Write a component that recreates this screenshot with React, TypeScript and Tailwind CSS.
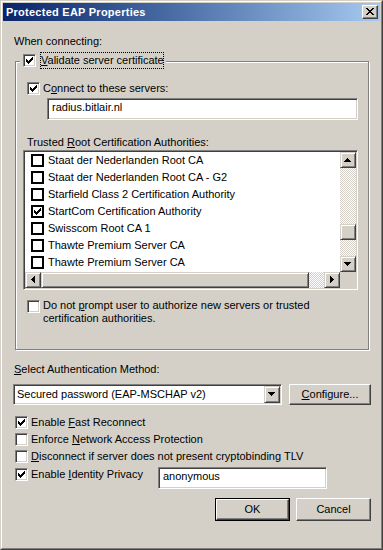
import React from "react";

const SUNKEN =
  "border border-t-[#808080] border-l-[#808080] border-b-white border-r-white shadow-[inset_1px_1px_0_#404040,inset_-1px_-1px_0_#d4d0c8]";
const RAISED =
  "border border-t-white border-l-white border-b-[#404040] border-r-[#404040] shadow-[inset_-1px_-1px_0_#808080] bg-[#d4d0c8]";
const SCROLLBTN =
  "border border-t-[#d4d0c8] border-l-[#d4d0c8] border-b-[#404040] border-r-[#404040] shadow-[inset_1px_1px_0_#fff,inset_-1px_-1px_0_#808080] bg-[#d4d0c8]";
const TRACK =
  "bg-[image:conic-gradient(#fff_25%,#d4d0c8_0_50%,#fff_0_75%,#d4d0c8_0)] bg-[length:2px_2px]";

const CHECK_PATH =
  "M0 2h1v3H0zM1 3h1v3H1zM2 4h1v3H2zM3 3h1v3H3zM4 2h1v3H4zM5 1h1v3H5zM6 0h1v3H6z";

function CheckMark() {
  return (
    <svg width="7" height="7" viewBox="0 0 7 7" shapeRendering="crispEdges">
      <path d={CHECK_PATH} fill="#000" />
    </svg>
  );
}

function CheckBox({ checked }: { checked?: boolean }) {
  return (
    <div
      className={`w-[13px] h-[13px] shrink-0 bg-white ${SUNKEN} flex items-center justify-center`}
    >
      {checked && <CheckMark />}
    </div>
  );
}

function FlatCheck({ checked }: { checked?: boolean }) {
  return (
    <div className="w-[13px] h-[13px] shrink-0 bg-white border-2 border-black flex items-center justify-center">
      {checked && <CheckMark />}
    </div>
  );
}

type Dir = "up" | "down" | "left" | "right";
const ARROWS: Record<Dir, string> = {
  up: "M6 5h1v1H6zM5 6h3v1H5zM4 7h5v1H4zM3 8h7v1H3z",
  down: "M3 5h7v1H3zM4 6h5v1H4zM5 7h3v1H5zM6 8h1v1H6z",
  left: "M5 6h1v1H5zM6 5h1v3H6zM7 4h1v5H7zM8 3h1v7H8z",
  right: "M5 3h1v7H5zM6 4h1v5H6zM7 5h1v3H7zM8 6h1v1H8z",
};

function ScrollBtn({ dir, h = 16 }: { dir: Dir; h?: number }) {
  return (
    <div
      className={`w-[16px] shrink-0 ${SCROLLBTN} ${h === 17 ? "h-[17px]" : "h-[16px]"}`}
    >
      <svg
        width="14"
        height={h - 2}
        viewBox={`0 0 14 ${h - 2}`}
        shapeRendering="crispEdges"
        className="block"
      >
        <path d={ARROWS[dir]} fill="#000" />
      </svg>
    </div>
  );
}

function U({ children }: { children: React.ReactNode }) {
  return <span className="underline underline-offset-[1px]">{children}</span>;
}

const ITEMS: [string, boolean][] = [
  ["Staat der Nederlanden Root CA", false],
  ["Staat der Nederlanden Root CA - G2", false],
  ["Starfield Class 2 Certification Authority", false],
  ["StartCom Certification Authority", true],
  ["Swisscom Root CA 1", false],
  ["Thawte Premium Server CA", false],
  ["Thawte Premium Server CA", false],
];

function CheckRow({
  checked,
  children,
  className = "",
}: {
  checked?: boolean;
  children: React.ReactNode;
  className?: string;
}) {
  return (
    <div className={`flex items-center h-[13px] ${className}`}>
      <CheckBox checked={checked} />
      <span className="ml-[3px] whitespace-nowrap leading-[13px]">{children}</span>
    </div>
  );
}

export default function App() {
  return (
    <div className="w-[383px] h-[550px] overflow-hidden font-['Liberation_Sans',Arial,sans-serif] text-[11px] leading-[13px] text-black bg-[#d4d0c8] border border-t-[#d4d0c8] border-l-[#d4d0c8] border-b-[#404040] border-r-[#404040]">
      <div className="h-full border border-t-white border-l-white border-b-[#808080] border-r-[#808080] p-[1px] flex flex-col">
        {/* Title bar */}
        <div className="h-[18px] shrink-0 flex items-center justify-between pl-[3px] pr-[2px] bg-linear-to-r from-[#0a246a] to-[#a6caf0]">
          <span className="font-bold text-white tracking-[0.25px] whitespace-nowrap">
            Protected EAP Properties
          </span>
          <div className={`w-[16px] h-[14px] ${RAISED}`}>
            <svg
              width="14"
              height="12"
              viewBox="0 0 14 12"
              shapeRendering="crispEdges"
              className="block"
            >
              <path
                d="M3 2h2v1H3zM9 2h2v1H9zM4 3h2v1H4zM8 3h2v1H8zM5 4h4v1H5zM6 5h2v1H6zM5 6h4v1H5zM4 7h2v1H4zM8 7h2v1H8zM3 8h2v1H3zM9 8h2v1H9z"
                fill="#000"
              />
            </svg>
          </div>
        </div>

        {/* Body */}
        <div className="flex-1 flex flex-col items-start">
          <div className="mt-[14px] ml-[11px] whitespace-nowrap">When connecting:</div>

          {/* Group box */}
          <div className="relative mt-[13px] ml-[12px] w-[354px] h-[289px] shrink-0 border border-[#808080] shadow-[inset_1px_1px_0_#fff,1px_1px_0_#fff] flex flex-col items-start">
            <div className="absolute left-[4px] top-[-10px] h-[17px] flex items-center bg-[#d4d0c8] pl-[3px] pr-[2px]">
              <CheckBox checked />
              <span className="ml-[4px] h-[17px] w-[124px] border border-dotted border-black pt-[1px] pl-[0px] whitespace-nowrap leading-[13px]">
                <U>V</U>alidate server certificate
              </span>
            </div>

            <CheckRow checked className="mt-[20px] ml-[11px]">
              C<U>o</U>nnect to these servers:
            </CheckRow>

            <div
              className={`mt-[3px] ml-[31px] w-[311px] h-[22px] shrink-0 bg-white ${SUNKEN} pl-[4px] pt-[2px] whitespace-nowrap`}
            >
              radius.bitlair.nl
            </div>

            <div className="mt-[16px] ml-[11px] whitespace-nowrap">
              Trusted <U>R</U>oot Certification Authorities:
            </div>

            {/* List view */}
            <div
              className={`mt-[1px] ml-[7px] w-[335px] h-[140px] shrink-0 bg-white ${SUNKEN} p-[1px] grid grid-cols-[315px_16px] grid-rows-[120px_16px]`}
            >
              <div className="overflow-hidden flex flex-col bg-white">
                {ITEMS.map(([label, checked], i) => (
                  <div key={i} className="h-[17px] shrink-0 flex items-center pl-[6px]">
                    <FlatCheck checked={checked} />
                    <span className="ml-[4px] whitespace-nowrap">{label}</span>
                  </div>
                ))}
              </div>
              <div className="flex flex-col">
                <ScrollBtn dir="up" />
                <div className={`h-[56px] ${TRACK}`} />
                <div className={`h-[16px] ${SCROLLBTN}`} />
                <div className={`h-[16px] ${TRACK}`} />
                <ScrollBtn dir="down" />
              </div>
              <div className="flex">
                <ScrollBtn dir="left" />
                <div className={`w-[268px] h-[16px] ${SCROLLBTN}`} />
                <div className={`w-[15px] h-[16px] ${TRACK}`} />
                <ScrollBtn dir="right" />
              </div>
              <div className="bg-[#d4d0c8]" />
            </div>

            <div className="mt-[9px] ml-[11px] flex items-start">
              <div className="mt-[1px]">
                <CheckBox />
              </div>
              <div className="ml-[3px] whitespace-nowrap leading-[13px]">
                Do not <U>p</U>rompt user to authorize new servers or trusted
                <br />
                certification authorities.
              </div>
            </div>
          </div>

          <div className="mt-[13px] ml-[11px] whitespace-nowrap">
            <U>S</U>elect Authentication Method:
          </div>

          <div className="mt-[8px] ml-[10px] flex gap-[7px]">
            <div className={`w-[269px] h-[21px] bg-white ${SUNKEN} p-[1px] flex`}>
              <div className="flex-1 pl-[2px] leading-[17px] whitespace-nowrap">
                Secured password (EAP-MSCHAP v2)
              </div>
              <ScrollBtn dir="down" h={17} />
            </div>
            <div className={`w-[82px] h-[21px] ${RAISED} flex items-center justify-center`}>
              <span>
                <U>C</U>onfigure...
              </span>
            </div>
          </div>

          <div className="mt-[11px] ml-[12px] flex flex-col items-start">
            <CheckRow checked>
              Enable <U>F</U>ast Reconnect
            </CheckRow>
            <CheckRow className="mt-[4px]">
              Enforce <U>N</U>etwork Access Protection
            </CheckRow>
            <CheckRow className="mt-[4px]">
              <U>D</U>isconnect if server does not present cryptobinding TLV
            </CheckRow>
            <div className="mt-[4px] flex items-start">
              <CheckRow checked className="mt-[1px] w-[143px]">
                Enable <U>I</U>dentity Privacy
              </CheckRow>
              <div
                className={`w-[169px] h-[22px] bg-white ${SUNKEN} pl-[4px] pt-[2px] whitespace-nowrap`}
              >
                anonymous
              </div>
            </div>
          </div>

          <div className="mt-[9px] ml-[212px] flex gap-[6px]">
            <div className="w-[75px] h-[23px] border border-black flex">
              <div className={`flex-1 ${RAISED} flex items-center justify-center`}>OK</div>
            </div>
            <div className={`w-[75px] h-[23px] ${RAISED} flex items-center justify-center`}>
              Cancel
            </div>
          </div>
        </div>
      </div>
    </div>
  );
}
